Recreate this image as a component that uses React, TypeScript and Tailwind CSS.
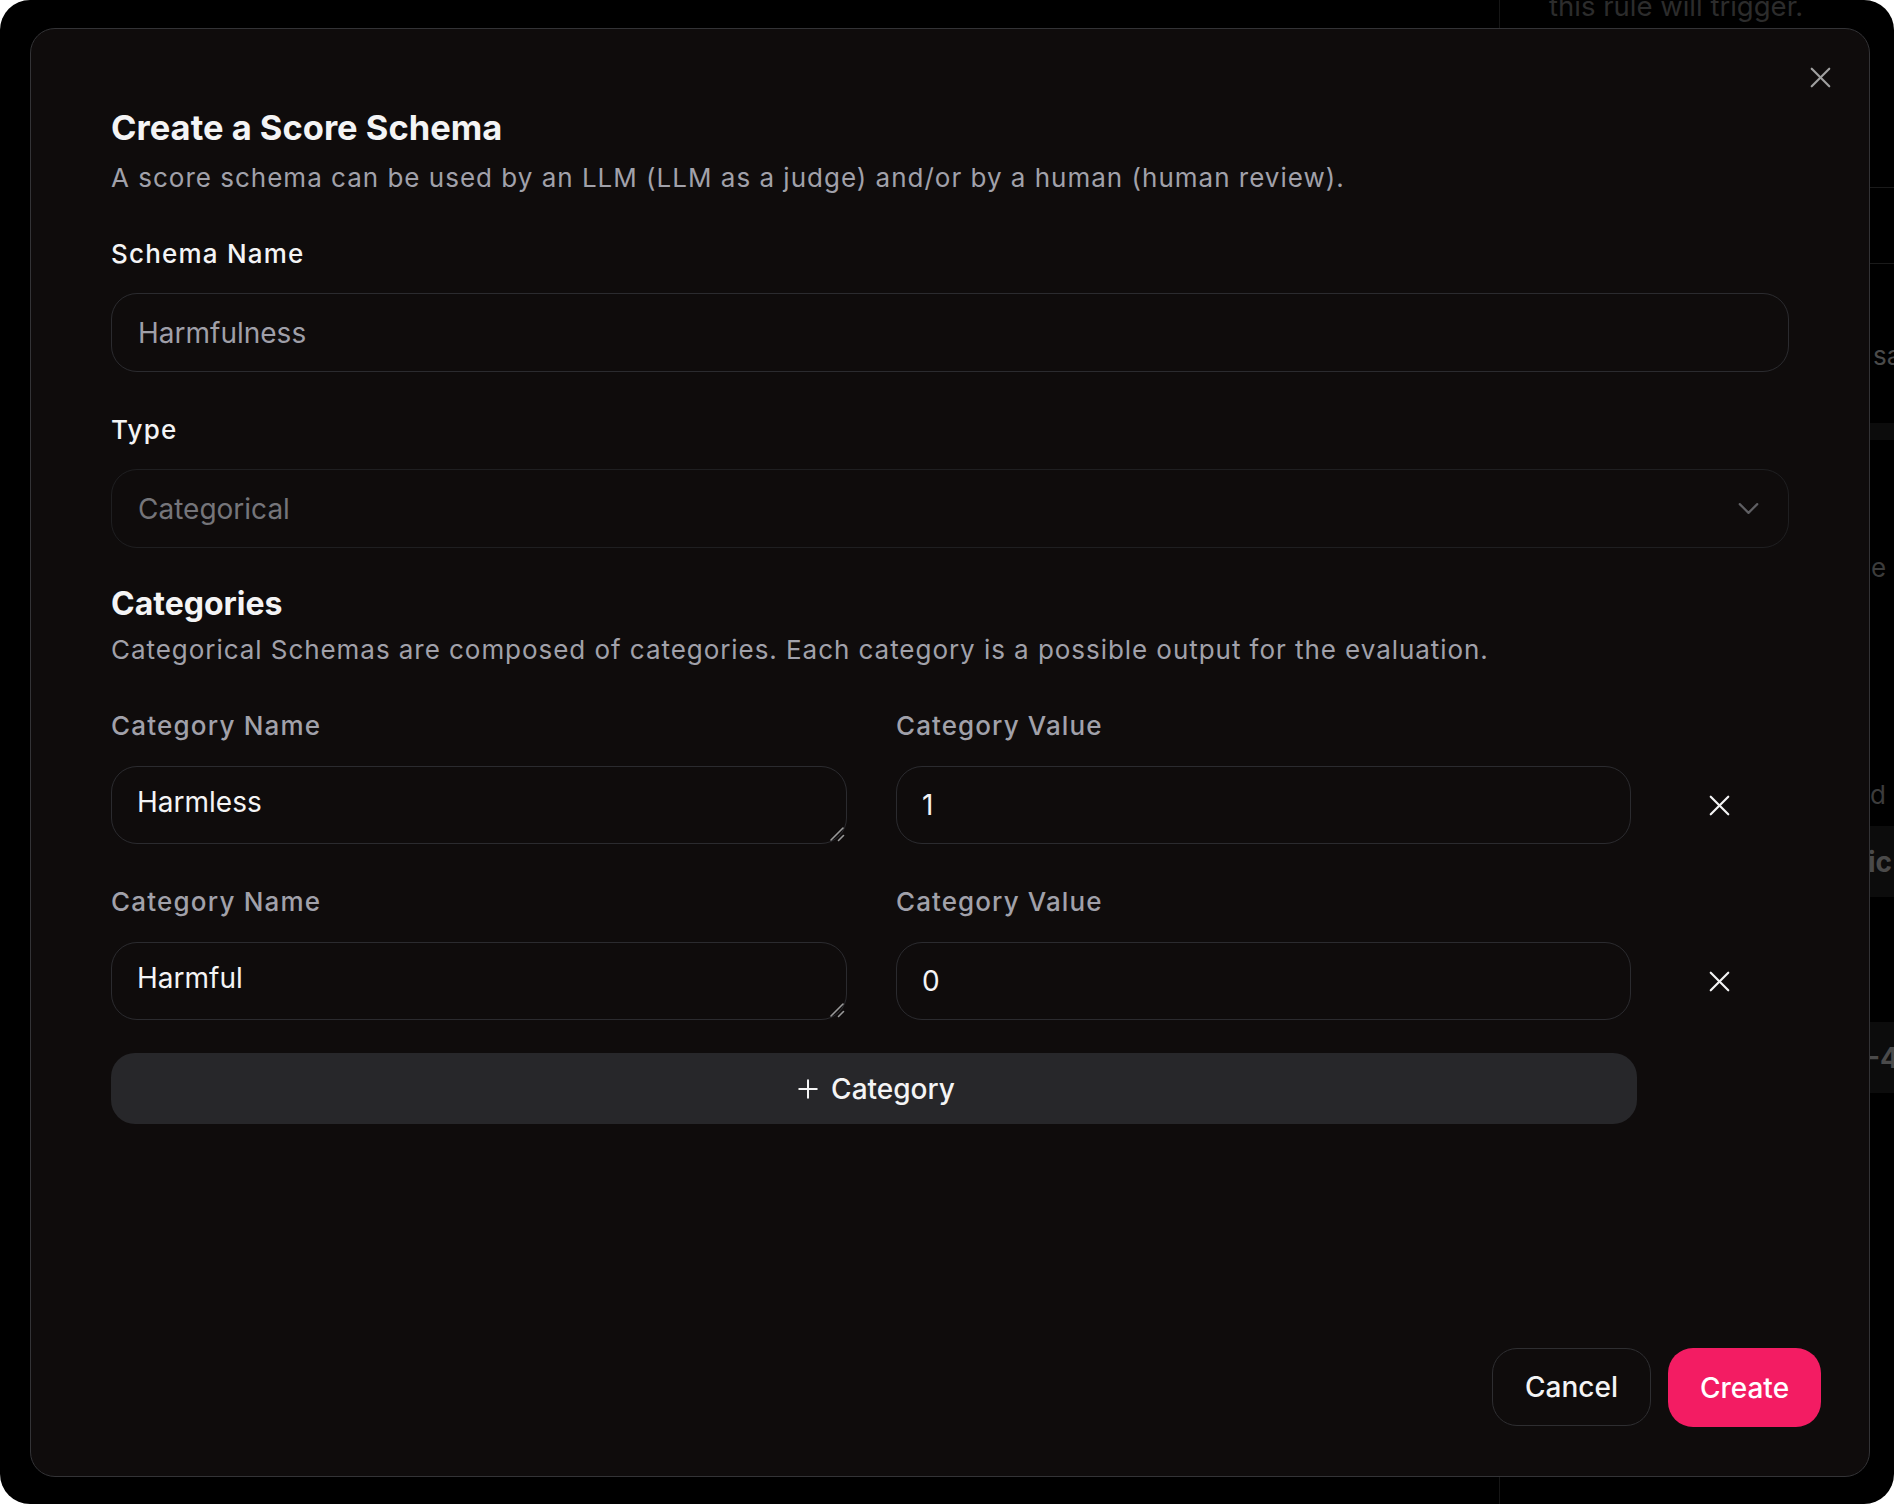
import React from "react";
import { X, ChevronDown, Plus } from "lucide-react";

function ResizeHandle() {
  return (
    <svg
      width="16"
      height="16"
      viewBox="0 0 16 16"
      className="pointer-events-none absolute bottom-[2px] right-[2px]"
    >
      <path d="M2 14 L14 2" stroke="#9a9a9a" strokeWidth="1.6" strokeLinecap="round" />
      <path d="M9.5 14.5 L14.5 9.5" stroke="#9a9a9a" strokeWidth="1.6" strokeLinecap="round" />
    </svg>
  );
}

function CategoryRow({ name, value }: { name: string; value: string }) {
  return (
    <div className="flex items-end">
      <div className="flex w-[736px] shrink-0 flex-col">
        <div className="text-[26px] leading-[35px] font-medium tracking-[1.2px] text-[#a1a1aa]">Category Name</div>
        <div className="relative mt-[23px] h-[78px] w-full">
          <textarea
            readOnly
            value={name}
            rows={1}
            className="block h-[78px] w-full resize-none rounded-[26px] border border-[#2b2b2f] bg-transparent px-[25px] py-[18px] text-[28px] leading-[35px] text-[#f4f4f5] outline-none"
          />
          <ResizeHandle />
        </div>
      </div>
      <div className="ml-[49px] flex w-[735px] shrink-0 flex-col">
        <div className="text-[26px] leading-[35px] font-medium tracking-[1.1px] text-[#a1a1aa]">Category Value</div>
        <div className="mt-[23px] flex h-[78px] w-full items-center rounded-[26px] border border-[#2b2b2f] px-[25px] text-[28px] text-[#f4f4f5]">
          {value}
        </div>
      </div>
      <div className="ml-[53px] flex h-[78px] w-[70px] shrink-0 items-center justify-center text-[#f4f4f5]">
        <X size={35} strokeWidth={1.5} />
      </div>
    </div>
  );
}

export default function App() {
  return (
    <div className="h-[1504px] w-[1894px] bg-white font-['Inter',sans-serif]">
      <div className="relative h-full w-full overflow-hidden rounded-[30px] bg-black">
        {/* background page */}
        <div className="flex h-full">
          <div className="w-[1499px] shrink-0" />
          <div className="flex min-w-0 flex-1 flex-col overflow-hidden whitespace-nowrap border-l border-[#161616]">
            <div className="h-[188px] border-b border-[#1a1a1a] pl-[49px]">
              <div className="-mt-[10px] text-[27.5px] leading-[32px] text-[#2c2c2c]">this rule will trigger.</div>
            </div>
            <div className="h-[76px] border-b border-[#1a1a1a]" />
            <div className="flex h-[159px] items-end pb-[48px] pl-[373px] text-[26px] text-[#4a4a4a]">sa</div>
            <div className="h-[17px] bg-[#0c0c0c]" />
            <div className="h-[260px] pl-[371px] pt-[110px] text-[26px] leading-[35px] text-[#3c3c3c]">e</div>
            <div className="h-[126px] pl-[370px] pt-[77px] text-[26px] leading-[35px] text-[#3c3c3c]">d l</div>
            <div className="flex h-[71px] items-center bg-[#0c0c0c] pl-[368px] text-[28px] font-bold text-[#4a4a4a]">ic</div>
            <div className="h-[125px]" />
            <div className="flex h-[71px] items-center bg-[#0c0c0c] pl-[367px] text-[28px] font-bold text-[#4a4a4a]">-4</div>
          </div>
        </div>

        {/* dialog overlay */}
        <div className="absolute left-[30px] top-[28px] flex h-[1449px] w-[1840px] flex-col rounded-[25px] border border-[#333336] bg-[#0f0c0c] px-[48px] pb-[49px] pt-[79px]">
          <div className="absolute right-[31px] top-[31px] text-[#a1a1a1]">
            <X size={35} strokeWidth={1.5} />
          </div>

          <div className="flex flex-col px-[32px]">
            <h2 className="text-[34.5px] leading-[40px] font-bold text-[#f4f4f5]">Create a Score Schema</h2>
            <p className="mt-[12px] text-[26px] leading-[35px] tracking-[1px] text-[#a1a1aa]">
              A score schema can be used by an LLM (LLM as a judge) and/or by a human (human review).
            </p>

            <div className="mt-[41px] text-[26px] leading-[35px] font-medium tracking-[1.2px] text-[#f4f4f5]">Schema Name</div>
            <div className="mt-[22px] flex h-[79px] items-center rounded-[26px] border border-[#2b2b2f] px-[26px] text-[28px] text-[#9f9fa8]">
              Harmfulness
            </div>

            <div className="mt-[40px] text-[26px] leading-[35px] font-medium tracking-[1.2px] text-[#f4f4f5]">Type</div>
            <div className="mt-[22px] flex h-[79px] items-center justify-between rounded-[26px] border border-[#1f1f21] pl-[26px] pr-[22px] text-[28px] text-[#75757a]">
              <span>Categorical</span>
              <ChevronDown size={35} strokeWidth={1.5} className="text-[#5f5f63]" />
            </div>

            <h3 className="mt-[36px] text-[32px] leading-[40px] font-bold text-[#f4f4f5]">Categories</h3>
            <p className="mt-[8px] text-[26px] leading-[35px] tracking-[0.95px] text-[#a1a1aa]">
              Categorical Schemas are composed of categories. Each category is a possible output for the evaluation.
            </p>

            <div className="mt-[41px] flex flex-col gap-[40px]">
              <CategoryRow name="Harmless" value="1" />
              <CategoryRow name="Harmful" value="0" />
            </div>

            <div className="mt-[33px] flex h-[71px] w-[1526px] items-center justify-center gap-[8px] rounded-[24px] bg-[#27272a] text-[28px] font-medium text-[#f4f4f5]">
              <Plus size={30} strokeWidth={1.6} />
              <span>Category</span>
            </div>
          </div>

          <div className="mt-auto flex justify-end gap-[17px]">
            <div className="flex h-[78px] w-[159px] items-center justify-center rounded-[25px] border border-[#2e2e31] text-[28px] font-medium text-[#f4f4f5]">
              Cancel
            </div>
            <div className="flex h-[79px] w-[153px] items-center justify-center rounded-[25px] bg-[#f31c63] text-[28px] font-medium text-white">
              Create
            </div>
          </div>
        </div>
      </div>
    </div>
  );
}
